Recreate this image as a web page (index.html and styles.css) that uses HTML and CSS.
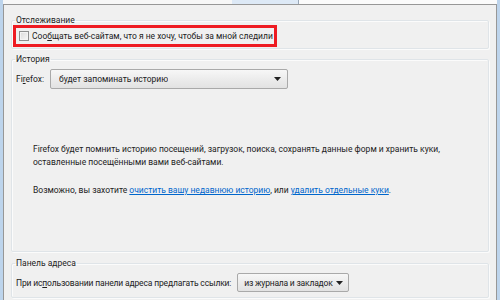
FILE: index.html
```html
<!DOCTYPE html>
<html lang="ru">
<head>
<meta charset="utf-8">
<title>Приватность</title>
<link rel="stylesheet" href="styles.css">
</head>
<body>
<div class="window">
  <div class="tabs">
    <span class="tab"></span>
    <span class="tab tab-sel"></span>
    <span class="tab tab-rest"></span>
  </div>
  <div class="panel">
    <fieldset class="group group-track">
      <legend>Отслеживание</legend>
      <label class="dnt">
        <span class="checkbox"></span>
        <span>Соо<u>б</u>щать веб-сайтам, что я не хочу, чтобы за мной следили</span>
      </label>
    </fieldset>

    <fieldset class="group group-history">
      <legend>История</legend>
      <div class="row">
        <span class="row-label">Fi<u>r</u>efox:</span>
        <div class="select select-wide">
          <span class="select-text">будет запоминать историю</span>
          <svg class="arrow" width="7" height="4" viewBox="0 0 7 4"><path d="M0 0h7L3.5 4z" fill="#222"/></svg>
        </div>
      </div>
      <p class="desc desc-first">Firefox будет помнить историю посещений, загрузок, поиска, сохранять данные форм и хранить куки,<br>оставленные посещёнными вами веб-сайтами.</p>
      <p class="desc desc-second">Возможно, вы захотите <a href="#">очистить вашу недавнюю историю</a>, или <a href="#">удалить отдельные куки</a>.</p>
    </fieldset>

    <fieldset class="group group-addr">
      <legend>Панель адреса</legend>
      <div class="row row-addr">
        <span class="row-label">При ис<u>п</u>ользовании панели адреса предлагать ссылки:</span>
        <div class="select select-small">
          <span class="select-text">из журнала и закладок</span>
          <svg class="arrow" width="7" height="4" viewBox="0 0 7 4"><path d="M0 0h7L3.5 4z" fill="#222"/></svg>
        </div>
      </div>
    </fieldset>
  </div>
</div>
</body>
</html>
```

FILE: styles.css
```css
html, body {
  margin: 0;
  padding: 0;
}

body {
  width: 500px;
  height: 300px;
  overflow: hidden;
  background: #f0f0f0;
  font-family: Roboto, "Noto Sans", sans-serif;
  font-size: 8.5px;
  color: #222;
  white-space: nowrap;
}

.window {
  box-sizing: border-box;
  height: 300px;
  border-left: 3px solid #bdd4ec;
  border-right: 3px solid #bdd4ec;
  display: flex;
  flex-direction: column;
}

.tabs {
  height: 4px;
  display: flex;
  background: #f9f9f9;
}

.tab {
  width: 229px;
  height: 4px;
  background: #f7f7f7;
}

.tab-sel {
  width: 66px;
  background: #dde9f6;
  border-right: 1px solid #9aa8b8;
}

.tab-rest {
  flex: 1;
  background: #fbfbfb;
}

.panel {
  flex: 1;
  border: 1px solid #979797;
  border-bottom: none;
  padding: 0 7px;
}

.group {
  margin: 0;
  padding: 0 0 0 3px;
  border: 1px solid #dfe4e8;
  border-radius: 2px;
  box-shadow: inset 1px 1px 0 #fbfbfb, 1px 1px 0 #fbfbfb;
  min-width: 0;
}

.group legend {
  padding: 0 1px;
  line-height: 12px;
}

.group-track {
  margin-top: 9px;
  padding-bottom: 1px;
}

.dnt {
  display: flex;
  align-items: center;
  width: 255px;
  height: 16px;
  margin: -1px 0 0 -2px;
  padding-left: 3px;
  border: 3px solid #ee1b22;
  gap: 3px;
}

.checkbox {
  box-sizing: border-box;
  flex: none;
  width: 10px;
  height: 10px;
  border: 1px solid #8e8f8f;
  background: linear-gradient(135deg, #dadada, #f7f7f7);
  box-shadow: inset 0 0 0 1px #f3f3f3;
}

.group-history {
  margin-top: 4px;
  padding-bottom: 54px;
}

.row {
  display: flex;
  align-items: center;
  margin-top: 4px;
  margin-left: 1px;
}

.group-history .row-label {
  width: 34px;
}

.row-addr .row-label {
  letter-spacing: -0.15px;
}

.select {
  box-sizing: border-box;
  flex: none;
  height: 20px;
  display: flex;
  align-items: center;
  justify-content: space-between;
  padding: 0 6px 0 8px;
  border: 1px solid #a9a9a9;
  border-radius: 2px;
  background: linear-gradient(#f7f7f7, #ececec 50%, #e2e2e2);
}

.select-text {
  overflow: hidden;
}

.arrow {
  flex: none;
}

.select-wide {
  width: 238px;
}

.select-small {
  width: 112px;
  height: 19px;
  margin-left: 6px;
  padding: 0 5px 0 6px;
}

.select-small .select-text {
  letter-spacing: -0.2px;
}

.desc {
  margin: 54px 0 0 18px;
  line-height: 13px;
}

.desc-second {
  margin-top: 15px;
}

.desc a {
  color: #0066cc;
}

.group-addr {
  margin-top: 5px;
  padding-bottom: 5px;
}
```
